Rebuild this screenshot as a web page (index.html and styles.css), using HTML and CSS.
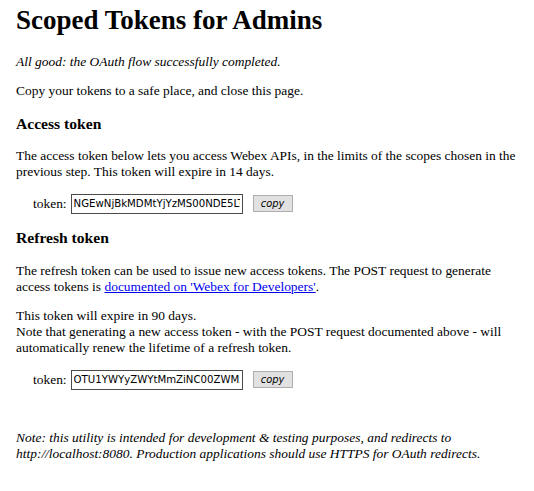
FILE: index.html
```html
<!DOCTYPE html>
<html>
<head>
<meta charset="utf-8">
<title>Scoped Tokens for Admins</title>
<link rel="stylesheet" href="styles.css">
</head>
<body>
<h1 class="title">Scoped Tokens for Admins</h1>
<p class="status"><em>All good: the OAuth flow successfully completed.</em></p>
<p>Copy your tokens to a safe place, and close this page.</p>

<h3 class="section">Access token</h3>
<p>The access token below lets you access Webex APIs, in the limits of the scopes chosen in the previous step. This token will expire in 14 days.</p>
<div class="token-row">
  <label class="token-label" for="access">token:</label>
  <input class="token-input" id="access" type="text" value="NGEwNjBkMDMtYjYzMS00NDE5LTk2ZDAtNmRmZGQ3ZjA2YTk4" readonly>
  <button class="copy-btn" type="button">copy</button>
</div>

<h3 class="section">Refresh token</h3>
<p>The refresh token can be used to issue new access tokens. The POST request to generate access tokens is <a href="#">documented on 'Webex for Developers'</a>.</p>
<p>This token will expire in 90 days.<br>Note that generating a new access token - with the POST request documented above - will automatically renew the lifetime of a refresh token.</p>
<div class="token-row">
  <label class="token-label" for="refresh">token:</label>
  <input class="token-input" id="refresh" type="text" value="OTU1YWYyZWYtMmZiNC00ZWMxLWI3YjctYjBmZGUzNDg5MjQ1" readonly>
  <button class="copy-btn" type="button">copy</button>
</div>

<p class="footnote"><em>Note: this utility is intended for development &amp; testing purposes, and redirects to http://localhost:8080. Production applications should use HTTPS for OAuth redirects.</em></p>
</body>
</html>
```

FILE: styles.css
```css
html, body {
  background: #ffffff;
}
body {
  margin: 0;
  padding: 5px 16px 0 16px;
  font-family: "Liberation Serif", "Times New Roman", serif;
  font-size: 13.45px;
  color: #000;
}
.title {
  font-size: 27px;
  font-weight: bold;
  margin: 0 0 17.9px 0;
}
p {
  margin: 13.33px 0;
}
.section {
  font-size: 15.6px;
  font-weight: bold;
  margin: 15.6px 0;
}
a {
  color: #0000ee;
  text-decoration: underline;
}
.token-row {
  display: flex;
  align-items: center;
  padding-left: 17px;
  margin: 13.33px 0;
}
.token-label {
  margin-right: 4px;
}
.token-input {
  width: 172px;
  height: 20px;
  box-sizing: border-box;
  border: 1px solid #4a4a4a;
  padding: 1px 2px;
  font-family: "DejaVu Sans Condensed", "DejaVu Sans", sans-serif;
  font-size: 11.3px;
  margin: 0;
  color: #000;
}
.copy-btn {
  margin-left: 10px;
  width: 40px;
  height: 17px;
  box-sizing: border-box;
  border: 1px solid #adadad;
  background: #e1e1e1;
  font-family: "DejaVu Sans Condensed", "DejaVu Sans", sans-serif;
  font-size: 11px;
  font-style: italic;
  padding: 0;
  color: #000;
}
.footnote {
  margin-top: 40px;
}
```
